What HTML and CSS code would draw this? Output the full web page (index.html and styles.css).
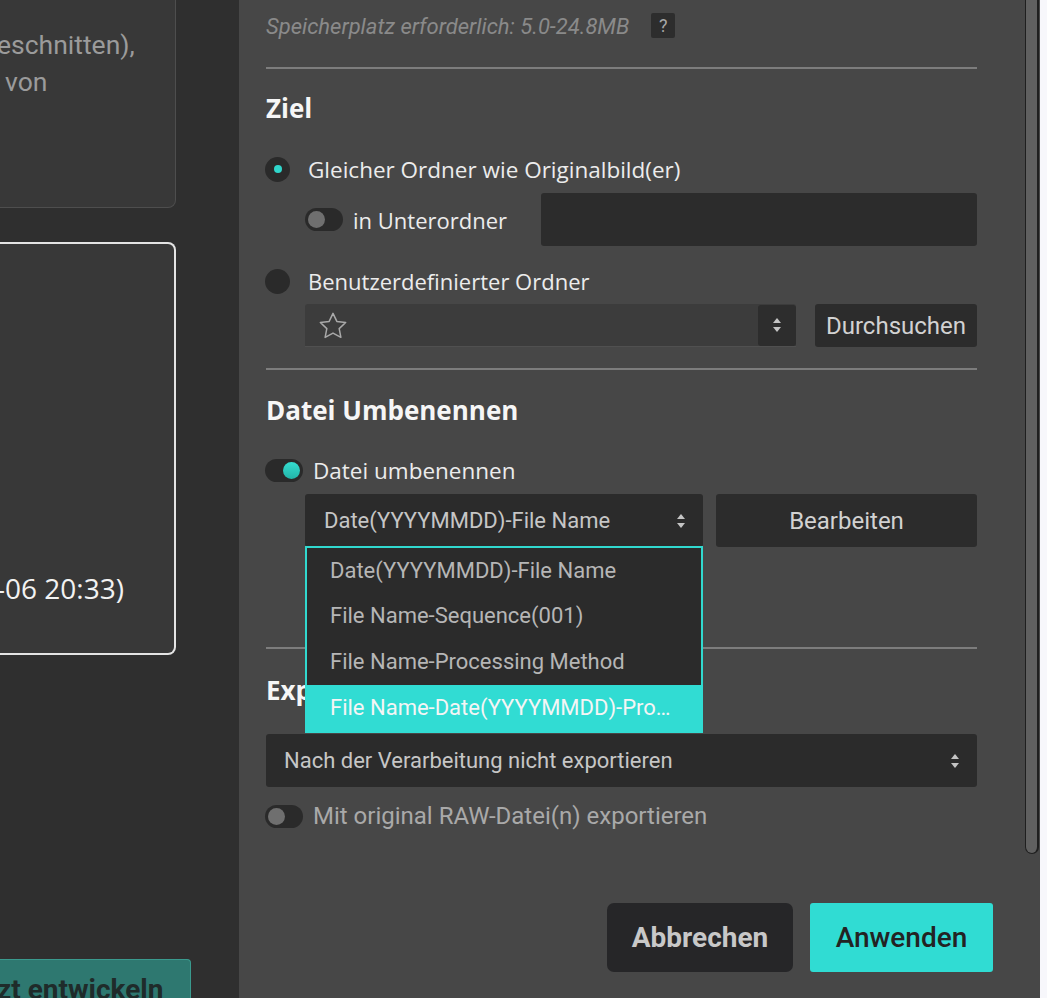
FILE: index.html
```html
<!DOCTYPE html>
<html lang="de">
<head>
<meta charset="utf-8">
<title>Export</title>
<link rel="stylesheet" href="styles.css">
</head>
<body>
<div class="app">
  <aside class="left">
    <div class="card card-a">
      <div class="line l1">eschnitten),</div>
      <div class="line l2">von</div>
    </div>
    <div class="card card-b">
      <div class="stamp">-06 20:33)</div>
    </div>
    <div class="develop" role="button">zt entwickeln</div>
  </aside>
  <main class="panel">
    <div class="content">
      <div class="storage">
        <span class="storage-text">Speicherplatz erforderlich: 5.0-24.8MB</span>
        <span class="help">?</span>
      </div>
      <div class="divider d1"></div>
      <h2 class="heading h-ziel">Ziel</h2>
      <div class="row radio-row r1">
        <span class="radio on"></span>
        <span class="label wide-label">Gleicher Ordner wie Originalbild(er)</span>
      </div>
      <div class="sub-row">
        <div class="toggle-line">
          <span class="toggle"><span class="knob"></span></span>
          <span class="label">in Unterordner</span>
        </div>
        <div class="text-input"></div>
      </div>
      <div class="row radio-row r2">
        <span class="radio"></span>
        <span class="label">Benutzerdefinierter Ordner</span>
      </div>
      <div class="folder-row">
        <div class="folder-field">
          <svg class="star" viewBox="0 0 32 32" width="32" height="30"><path d="M16 2.5l4.1 8.6 9.4 1.2-6.9 6.5 1.8 9.3L16 23.6l-8.4 4.5 1.8-9.3-6.9-6.5 9.4-1.2z" fill="none" stroke="#a9a9a9" stroke-width="1.6" stroke-linejoin="round"/></svg>
          <span class="spinner"><svg viewBox="0 0 10 16" width="10" height="16"><path d="M5 1L9 6H1z" fill="#c4c4c4"/><path d="M5 15L9 10H1z" fill="#c4c4c4"/></svg></span>
        </div>
        <button class="btn-dark browse">Durchsuchen</button>
      </div>
      <div class="divider d2"></div>
      <h2 class="heading h-rename">Datei Umbenennen</h2>
      <div class="row toggle-row t1">
        <span class="toggle on"><span class="knob"></span></span>
        <span class="label wide-label">Datei umbenennen</span>
      </div>
      <div class="rename-row">
        <div class="select-wrap">
          <div class="select">
            <span class="select-text">Date(YYYYMMDD)-File Name</span>
            <svg viewBox="0 0 10 16" width="10" height="16"><path d="M5 1L9 6H1z" fill="#c4c4c4"/><path d="M5 15L9 10H1z" fill="#c4c4c4"/></svg>
          </div>
          <ul class="dropdown">
            <li>Date(YYYYMMDD)-File Name</li>
            <li>File Name-Sequence(001)</li>
            <li>File Name-Processing Method</li>
            <li class="active">File Name-Date(YYYYMMDD)-Processing Method</li>
          </ul>
        </div>
        <button class="btn-dark edit">Bearbeiten</button>
      </div>
      <div class="divider d3"></div>
      <h2 class="heading h-export">Export</h2>
      <div class="select wide">
        <span class="select-text cond">Nach der Verarbeitung nicht exportieren</span>
        <svg viewBox="0 0 10 16" width="10" height="16"><path d="M5 1L9 6H1z" fill="#c4c4c4"/><path d="M5 15L9 10H1z" fill="#c4c4c4"/></svg>
      </div>
      <div class="row toggle-row t2">
        <span class="toggle"><span class="knob"></span></span>
        <span class="label muted cond raw">Mit original RAW-Datei(n) exportieren</span>
      </div>
      <div class="actions">
        <button class="btn-cancel">Abbrechen</button>
        <button class="btn-apply">Anwenden</button>
      </div>
    </div>
    <div class="scroll-col"><div class="thumb"></div></div>
  </main>
  <div class="edge"></div>
</div>
</body>
</html>
```
FILE: styles.css
```css
* { box-sizing: border-box; }
html, body { margin: 0; padding: 0; }
body {
  width: 1047px;
  height: 998px;
  overflow: hidden;
  background: #474747;
  font-family: Roboto, "Noto Sans", sans-serif;
}
.app {
  display: flex;
  height: 998px;
  overflow: hidden;
}

/* ---------- left column ---------- */
.left {
  width: 239px;
  flex: none;
  background: #2f2f2f;
  display: flex;
  flex-direction: column;
  align-items: flex-start;
  overflow: hidden;
}
.left > * { flex: none; }
.card {
  width: 176px;
  background: #383838;
  border-radius: 0 8px 8px 0;
}
.card-a {
  height: 300px;
  margin-top: -92px;
  border: 1px solid #4e4e4e;
  border-left: none;
  padding-top: 117px;
  color: #9b9b9b;
  font-size: 26.5px;
  line-height: 37px;
}
.card-a .line { white-space: nowrap; }
.card-a .l1 { margin-left: -3px; }
.card-a .l2 { margin-left: 5px; }
.card-b {
  height: 413px;
  margin-top: 34px;
  border: 2px solid #e4e4e4;
  border-left: none;
  padding-top: 326px;
}
.stamp {
  margin-left: -4px;
  color: #f2f2f2;
  font-family: "Open Sans", "Noto Sans", sans-serif;
  font-size: 28px;
  line-height: 36px;
  white-space: nowrap;
}
.develop {
  margin-top: 304px;
  width: 191px;
  height: 70px;
  border: 1px solid #3a9a8e;
  border-left: none;
  border-radius: 0 4px 0 0;
  background: #2e7870;
  color: #1f2b2a;
  font-family: Roboto, sans-serif;
  font-weight: 700;
  font-size: 28px;
  line-height: 34px;
  padding-top: 13px;
  text-indent: -3px;
  white-space: nowrap;
}

/* ---------- panel ---------- */
.panel {
  width: 801px;
  flex: none;
  display: flex;
  background: #474747;
  padding-right: 1px;
}
.content {
  flex: 1;
  padding: 0 48px 0 27px;
  position: relative;
}
.scroll-col {
  width: 14px;
  flex: none;
}
.thumb {
  height: 854px;
  background: #606060;
  border: 1px solid #1f1f1f;
  border-right-width: 2px;
  border-top: none;
  border-radius: 0 0 7px 7px;
}
.edge {
  width: 7px;
  flex: none;
  background: #f7f7fb;
}

.storage {
  display: flex;
  align-items: center;
  height: 25px;
  margin-top: 13px;
}
.storage-text {
  font-style: italic;
  color: #8a8a8a;
  font-size: 22px;
  position: relative;
  top: 1px;
  white-space: nowrap;
}
.help {
  margin-left: 22px;
  width: 24px;
  height: 25px;
  background: #2d2d2d;
  border-radius: 2px;
  color: #a8a8a8;
  font-size: 18px;
  display: flex;
  align-items: center;
  justify-content: center;
}

.divider {
  height: 2px;
  background: #7d7d7d;
}
.d1 { margin-top: 29px; }
.d2 { margin-top: 21px; }
.d3 { margin-top: 100px; }

.heading {
  margin: 0;
  height: 36px;
  line-height: 36px;
  color: #f6f6f6;
  font-family: "Open Sans", "Noto Sans", sans-serif;
  font-size: 26px;
  font-weight: 700;
  white-space: nowrap;
}
.h-ziel { margin-top: 21px; }
.h-rename { margin-top: 22px; }
.h-export { margin-top: 23px; }

.row {
  display: flex;
  align-items: center;
  height: 30px;
}
.label {
  color: #ececec;
  font-family: "Open Sans", "Noto Sans", sans-serif;
  font-size: 22px;
  white-space: nowrap;
}
.wide-label { font-size: 22.5px; }
.label.muted { color: #a9a9a9; }
.cond {
  font-family: Roboto, sans-serif;
  font-size: 23px;
  letter-spacing: 0;
}
.cond.raw { font-size: 24px; }

.radio {
  width: 25px;
  height: 25px;
  border-radius: 50%;
  background: #2a2a2a;
  display: flex;
  align-items: center;
  justify-content: center;
  margin-left: -1px;
  margin-right: 18px;
}
.radio.on::after {
  content: "";
  width: 8px;
  height: 8px;
  border-radius: 50%;
  background: #30d6cb;
}
.r1 { margin-top: 28px; }
.r2 { margin-top: 20px; }

.sub-row {
  display: flex;
  align-items: center;
  height: 53px;
  margin-top: 9px;
  padding-left: 39px;
}
.toggle-line {
  display: flex;
  align-items: center;
  width: 236px;
  flex: none;
}
.toggle {
  width: 38px;
  height: 23px;
  border-radius: 12px;
  background: #2a2a2a;
  display: flex;
  align-items: center;
  padding: 0 3px;
  flex: none;
  margin-right: 10px;
}
.toggle .knob {
  width: 17px;
  height: 17px;
  border-radius: 50%;
  background: #6f6f6f;
}
.toggle.on { justify-content: flex-end; }
.toggle.on .knob { background: linear-gradient(#35dccf, #22b4a8); }
.text-input {
  flex: 1;
  height: 53px;
  background: #2c2c2c;
  border-radius: 3px;
}

.folder-row {
  display: flex;
  height: 43px;
  margin-top: 8px;
  padding-left: 39px;
}
.folder-field {
  width: 491px;
  flex: none;
  background: #3c3c3c;
  border-bottom: 1px solid #505050;
  border-radius: 3px 3px 0 0;
  display: flex;
  align-items: center;
  justify-content: space-between;
  padding-left: 12px;
}
.star { display: block; margin-top: 2px; }
.spinner {
  width: 38px;
  height: 41px;
  background: #2d2d2d;
  border-radius: 3px;
  display: flex;
  align-items: center;
  justify-content: center;
}
.spinner svg { display: block; }
.btn-dark {
  background: #2c2c2c;
  border: none;
  border-radius: 3px;
  color: #d2d2d2;
  font-family: Roboto, sans-serif;
  font-size: 24px;
  padding: 0;
}
.browse {
  margin-left: 19px;
  flex: 1;
}

.toggle-row .toggle { margin-left: -1px; }
.t1 { margin-top: 27px; }
.t2 { margin-top: 14px; }

.rename-row {
  display: flex;
  height: 53px;
  margin-top: 9px;
  padding-left: 39px;
}
.select-wrap {
  width: 398px;
  flex: none;
  position: relative;
}
.select {
  height: 53px;
  background: #2b2b2b;
  border-radius: 3px;
  display: flex;
  align-items: center;
  justify-content: space-between;
  padding: 0 17px 0 19px;
}
.select-text {
  color: #c6c6c6;
  font-size: 22px;
  white-space: nowrap;
}
.select svg { display: block; flex: none; }
.edit {
  margin-left: 13px;
  flex: 1;
}
.dropdown {
  position: absolute;
  left: 0;
  top: 52px;
  width: 398px;
  height: 187px;
  margin: 0;
  padding: 0;
  list-style: none;
  background: #2b2b2b;
  border: 2px solid #31d9cf;
  border-bottom: none;
  z-index: 5;
}
.dropdown li {
  height: 46px;
  line-height: 46px;
  padding: 0 30px 0 23px;
  color: #b6b6b6;
  font-size: 22px;
  white-space: nowrap;
  overflow: hidden;
  text-overflow: ellipsis;
}
.dropdown li:first-child { height: 45px; line-height: 46px; }
.dropdown li.active {
  background: #31dcd3;
  color: #f5f5f5;
  margin: 0 -2px;
  padding-left: 25px;
  padding-right: 30px;
  height: 48px;
}

.select.wide {
  margin-top: 26px;
  padding-left: 18px;
}

.actions {
  display: flex;
  justify-content: flex-end;
  margin-top: 72px;
  margin-right: -16px;
  gap: 17px;
}
.btn-cancel, .btn-apply {
  height: 69px;
  border: none;
  font-family: Roboto, sans-serif;
  font-size: 28px;
  padding: 0;
}
.btn-cancel {
  width: 186px;
  background: #262628;
  border-radius: 7px;
  color: #c8c8c8;
  font-weight: 700;
}
.btn-apply {
  width: 183px;
  background: #30dcd3;
  border-radius: 3px;
  color: #232323;
  font-weight: 500;
}
```
